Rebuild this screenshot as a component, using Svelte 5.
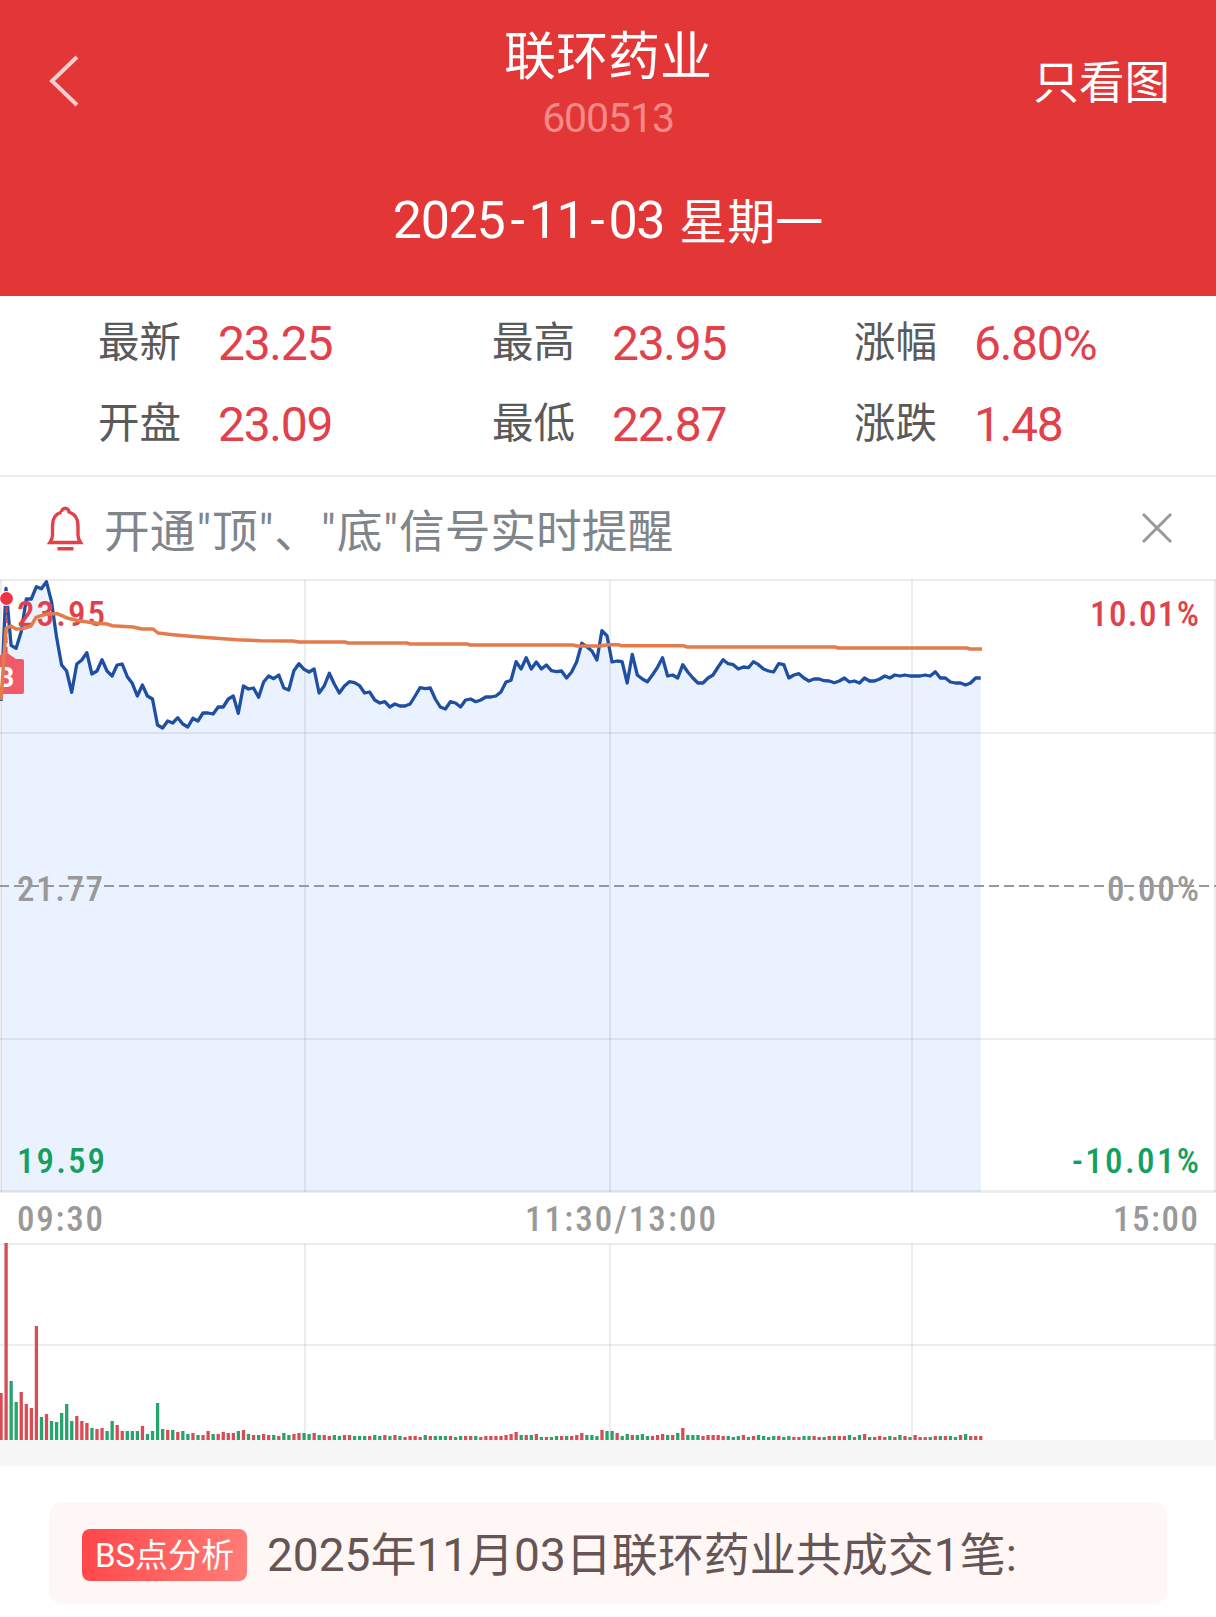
<script>
  const step = 5.05;

  // distance of every minute price from the top of the chart
  const prices = [
    122, 9.3, 66.3, 69.3, 52.7, 20, 20, 7.7, 9.7, 2.7, 22.7, 57.7, 86, 92, 113.3, 85, 81, 73.7, 95, 92,
    80.7, 92, 97, 86, 85, 97.7, 104.3, 117, 106, 117, 120, 146, 149, 142, 144, 138.7, 145, 148, 139.3, 142,
    134, 134, 135, 128, 128, 120, 117, 134.3, 107, 110, 109, 118.3, 103, 97, 99.7, 96, 109, 111, 91.7, 84.7,
    90.3, 93, 90, 114, 107, 94.3, 105, 114, 107, 102.7, 103.7, 106.7, 114, 113, 121, 124, 122.7, 128, 125, 127,
    127, 125, 117, 108.7, 109.7, 109, 120, 128, 130, 122.7, 124, 128, 121, 120, 122.7, 121, 118, 118, 117, 113,
    103, 101.3, 82.7, 90, 78.7, 90, 83, 90, 86, 91.7, 92.7, 92, 99, 93, 82.7, 64.3, 67.7, 72, 81, 51.7,
    56.7, 83, 82, 82.7, 104, 75.3, 96, 100, 102.7, 96, 88.3, 78.7, 97, 96, 99, 85.7, 93, 99, 104, 104,
    99, 96, 88, 80.7, 84.7, 85.7, 90, 88, 88.7, 82.7, 85.7, 90, 92, 93, 84.7, 85.7, 99, 96, 94.7, 99,
    102, 100, 100, 101.7, 102, 103.7, 102, 99, 103, 102, 104, 99, 102, 102, 100, 97, 99, 96, 97, 96,
    97, 97, 97, 96, 97, 92.7, 99, 99, 103, 104, 104, 106, 104, 99, 99
  ];

  const average =
    "1,121 6,49.3 11,47 16,50 21,49.7 26,48.7 31,47 36,38.3 41,36.7 46,35.3 51,34.7 57,34.7 62,36.7 68,39.3 80,42 97,44.3 107,45 112,46.7 133,48 142,50 153,50 158,54 173,55.7 190,57.3 213,59 237,60.7 260,61.7 293,62 299,63 345,63 348,64 407,64 410,65 467,65 470,66 573,66 577,67 600,67 608,65.7 618,65.7 622,66.7 683,66.7 687,68 835,68 838,69 967,69 970,70 982,70";

  // r = up minute, g = down minute
  const volumes = `
    r47 r197 g59 g38 r48 r36 r32 r114 g23 r26 g19 g18 g27 g36 g19 r24 r19 r17 g12 r11
    r12 g9 g19 r15 r9 g9 g9 g9 r14 g6 g9 g37 g11 r10 g10 r8 g9 g6 r7 g5
    r5 r9 g6 r6 r8 r7 r7 g9 r10 g6 r5 g5 r6 r5 g5 r4 g7 g5 r6 r7
    g7 g6 r7 g5 r5 r4 g5 g4 r5 r5 g4 g4 g4 r4 g5 g4 r5 g4 r5 g4
    r3 r4 r4 r3 g5 r4 g4 g4 g4 r4 g3 g4 r4 r4 g4 r3 r4 r4 r4 r4
    r5 r6 r8 g5 r5 g5 r6 g3 r3 g3 g4 r4 g4 r4 r5 r7 g5 g5 g4 r10
    g9 g9 r7 g4 g6 r5 g5 g6 g4 r4 r5 r6 g5 r5 g7 r12 g5 g5 g5 r4
    r5 r5 r5 r4 g4 g3 g4 r5 g3 r4 g5 g4 g3 g4 r4 g3 g4 r3 r3 g4
    g4 r4 r3 g3 r4 g4 r4 r4 g5 r3 g5 r6 g3 r3 r4 r3 g4 r3 g5 r4
    g3 r5 r3 r3 g3 r4 g4 r4 g4 g3 r5 g6 r4 r4 r4
  `
    .trim()
    .split(/\s+/)
    .map((v) => ({ up: v[0] === "r", h: +v.slice(1) }));

  const line = prices.map((y, i) => `${(1 + i * step).toFixed(1)},${y}`).join(" ");
  const area = `1,613 ${line} 981,613`;

  const stats = [
    ["最新", "23.25"],
    ["最高", "23.95"],
    ["涨幅", "6.80%"],
    ["开盘", "23.09"],
    ["最低", "22.87"],
    ["涨跌", "1.48"]
  ];
</script>

<main>
  <header>
    <div class="bar">
      <svg class="back" width="30" height="52" viewBox="0 0 30 52">
        <path d="M28 2 3 26l25 24" />
      </svg>
      <div class="title">
        <h1>联环药业</h1>
        <p>600513</p>
      </div>
      <span class="only">只看图</span>
    </div>
    <div class="date">
      <span class="num">2025<i>-</i>11<i>-</i>03</span><span class="week">星期一</span>
    </div>
  </header>

  <section class="stats">
    {#each stats as [label, value]}
      <div class="stat">
        <span class="label">{label}</span>
        <span class="value">{value}</span>
      </div>
    {/each}
  </section>

  <section class="notice">
    <svg width="38" height="46" viewBox="0 0 38 46">
      <path d="M15.500 7a3.700 3.700 0 0 1 7.500 0C29 9 32 14 32 20.500v9.500c0 3 .8 5 2.500 7.500h-30.500c1.700-2.500 2.500-4.500 2.500-7.500V20.500C6.500 14 9.500 9 15.500 7M11.500 43.800h16" />
    </svg>
    <p>开通<i>"</i>顶<i>"</i>、<i>"</i>底<i>"</i>信号实时提醒</p>
    <svg class="close" width="32" height="32" viewBox="0 0 32 32">
      <path d="M2 2l28 28M30 2 2 30" />
    </svg>
  </section>

  <svg class="chart" width="1216" height="615" viewBox="0 0 1216 615">
    <polygon class="area" points={area} />
    <g class="grid">
      <path d="M0 1h1216M0 154h1216M0 460h1216" />
      <path d="M1 1v612M305 1v612M610 1v612M912 1v612M1215 1v612" />
      <path class="bottom" d="M0 612.500h1216" />
    </g>
    <path class="zero" d="M0 307h1216" />
    <polyline class="price" points={line} />

    <path class="link" d="M6.500 28v48" />
    <path class="flag" d="M0 76 6 73l10 7h6q2 0 2 2v31q0 2-2 2H0z" />
    <text class="flag-text" x="-3" y="108">B</text>
    <circle class="dot" cx="6.500" cy="19.500" r="7" />

    <text class="red" x="17" y="47" textLength="88">23.95</text>
    <text class="red" x="1090" y="47" textLength="109">10.01%</text>
    <text class="grey" x="17" y="322" textLength="86">21.77</text>
    <text class="grey" x="1107" y="322" textLength="92">0.00%</text>
    <text class="green" x="17" y="594" textLength="88">19.59</text>
    <text class="green" x="1072" y="594" textLength="127">-10.01%</text>
    <polyline class="average" points={average} />
  </svg>

  <svg class="times" width="1216" height="49" viewBox="0 0 1216 49">
    <text class="grey" x="17" y="37" textLength="86">09:30</text>
    <text class="grey" x="525" y="37" textLength="191">11:30/13:00</text>
    <text class="grey" x="1113" y="37" textLength="85">15:00</text>
  </svg>

  <svg class="chart" width="1216" height="197" viewBox="0 0 1216 197">
    <g class="grid">
      <path d="M0 1h1216M0 102h1216" />
      <path d="M305 1v196M610 1v196M912 1v196M1215 1v196" />
    </g>
    {#each volumes as v, i}
      <rect class={v.up ? "up" : "down"} x={i * step - 0.6} y={197 - v.h} width="3.3" height={v.h} />
    {/each}
  </svg>

  <div class="gap"></div>

  <section class="card">
    <span class="badge">BS点分析</span>
    <p>2025年11月03日联环药业共成交1笔:</p>
  </section>
</main>

<style>
  :global(body) {
    margin: 0;
    background: #fff;
  }

  main {
    width: 1216px;
    height: 1617px;
    overflow: hidden;
    font-family: Roboto, "Noto Sans CJK SC", sans-serif;
  }

  h1,
  p {
    margin: 0;
    font-weight: 400;
  }

  i {
    font-style: normal;
  }

  svg {
    display: block;
    flex: none;
  }

  path,
  polyline {
    fill: none;
  }

  header {
    height: 296px;
    box-sizing: border-box;
    background: #e33636;
    color: #fff;
  }

  .bar {
    display: grid;
    grid-template-columns: 200px 1fr 200px;
    align-items: center;
    height: 162px;
  }

  .back {
    margin-left: 49px;
  }

  .back path {
    stroke: #f4cdcd;
    stroke-width: 4;
  }

  .title {
    text-align: center;
    padding-top: 5px;
  }

  .title h1 {
    font-size: 52px;
    line-height: 70px;
  }

  .title p {
    font-size: 41px;
    line-height: 51px;
    letter-spacing: -1.1px;
    color: #f58a88;
  }

  .only {
    font-size: 45.5px;
    justify-self: end;
    margin-right: 46px;
    padding-bottom: 5px;
  }

  .date {
    display: flex;
    align-items: center;
    justify-content: center;
    gap: 15px;
    height: 116px;
    font-size: 48px;
  }

  .date .week {
    padding-bottom: 5px;
  }

  .date .num {
    font-size: 52px;
    letter-spacing: -1.3px;
  }

  .date i {
    padding: 0 5px 0 6px;
  }

  .stats {
    display: grid;
    grid-template-columns: 394px 362px 1fr;
    grid-template-rows: 81px 81px;
    padding: 2px 0 15px 98px;
    height: 162px;
    margin-bottom: -1px;
    border-bottom: 2px solid #ebebeb;
  }

  .stat {
    display: flex;
    align-items: center;
  }

  .label {
    width: 120px;
    font-size: 41.5px;
    color: #5a5a5a;
  }

  .value {
    font-size: 48px;
    line-height: 60px;
    padding-top: 10px;
    letter-spacing: -1.3px;
    color: #e2404a;
  }

  .notice {
    display: flex;
    align-items: center;
    height: 103px;
    padding: 0 43px 0 46px;
    font-size: 45.7px;
    color: #80858c;
  }

  .notice path {
    stroke: #e2404a;
    stroke-width: 3.4;
  }

  .notice p {
    flex: 1;
    margin-left: 20px;
  }

  .notice i {
    padding: 0 1px;
  }

  .notice .close path {
    stroke: #999;
    stroke-width: 3;
  }

  .chart text,
  .times text {
    font-size: 35px;
    font-weight: 500;
    font-stretch: 85%;
  }

  .area {
    fill: #ebf2ff;
  }

  .grid path {
    stroke: rgba(0, 0, 0, 0.07);
    stroke-width: 2;
  }

  .grid .bottom {
    stroke-width: 3;
  }

  .zero {
    stroke: #999;
    stroke-width: 2;
    stroke-dasharray: 10 5;
    stroke-dashoffset: 1;
  }

  .price {
    stroke: #1f4fa3;
    stroke-width: 3.3;
    stroke-linejoin: round;
  }

  .average {
    stroke: #e57b4b;
    stroke-width: 3.5;
    stroke-linejoin: round;
  }

  .link {
    stroke: #e2404a;
    stroke-width: 2;
    stroke-dasharray: 6 4;
  }

  .flag {
    fill: #f15b69;
  }

  .chart .flag-text {
    fill: #fff;
    font-size: 27px;
    font-weight: 700;
    font-stretch: 100%;
  }

  .dot {
    fill: #ee3343;
    stroke: #fff;
    stroke-width: 1.2;
  }

  .red {
    fill: #e2404a;
  }

  .green {
    fill: #14a05f;
  }

  .grey {
    fill: #999;
  }

  .up {
    fill: #d94c54;
  }

  .down {
    fill: #27a36c;
  }

  .gap {
    height: 26px;
    background: #f7f7f7;
  }

  .card {
    display: flex;
    align-items: center;
    gap: 20px;
    height: 102px;
    margin: 36px 49px 0;
    padding-left: 33px;
    border-radius: 14px;
    background: #fff7f5;
    color: #665554;
    font-size: 46px;
  }

  .card p {
    padding-bottom: 4px;
  }

  .badge {
    width: 165px;
    height: 52px;
    margin-top: 4px;
    border-radius: 8px;
    background: linear-gradient(100deg, #ff4649, #ff7e78);
    color: #fff;
    font-size: 33px;
    line-height: 54px;
    text-align: center;
  }
</style>
